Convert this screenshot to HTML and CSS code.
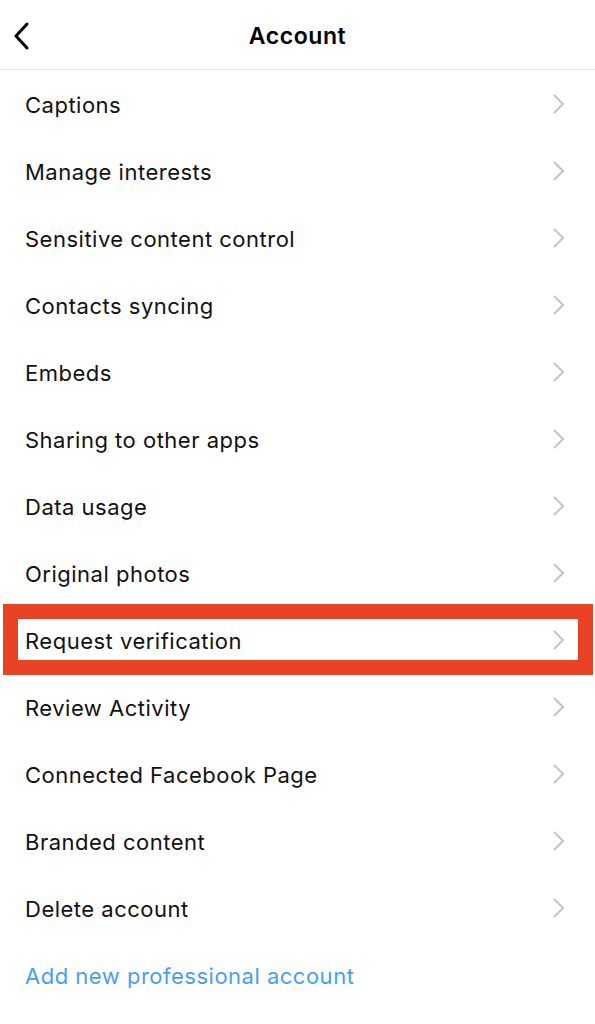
FILE: index.html
```html
<!DOCTYPE html>
<html>
<head>
<meta charset="utf-8">
<link rel="stylesheet" href="styles.css">
</head>
<body>
<div class="screen">
  <header class="topbar">
    <svg class="back" width="20" height="28" viewBox="0 0 20 28"><path d="M15 2 L4 14 L15 26" fill="none" stroke="#000" stroke-width="3" stroke-linecap="round" stroke-linejoin="round"/></svg>
    <h1 class="title">Account</h1>
  </header>
  <ul class="list">
    <li class="row"><span>Captions</span><svg class="chev" viewBox="0 0 14 22"><path d="M2 2 L11 11 L2 20" fill="none" stroke="#c4c4c7" stroke-width="2"/></svg></li>
    <li class="row"><span>Manage interests</span><svg class="chev" viewBox="0 0 14 22"><path d="M2 2 L11 11 L2 20" fill="none" stroke="#c4c4c7" stroke-width="2"/></svg></li>
    <li class="row"><span>Sensitive content control</span><svg class="chev" viewBox="0 0 14 22"><path d="M2 2 L11 11 L2 20" fill="none" stroke="#c4c4c7" stroke-width="2"/></svg></li>
    <li class="row"><span>Contacts syncing</span><svg class="chev" viewBox="0 0 14 22"><path d="M2 2 L11 11 L2 20" fill="none" stroke="#c4c4c7" stroke-width="2"/></svg></li>
    <li class="row"><span>Embeds</span><svg class="chev" viewBox="0 0 14 22"><path d="M2 2 L11 11 L2 20" fill="none" stroke="#c4c4c7" stroke-width="2"/></svg></li>
    <li class="row"><span>Sharing to other apps</span><svg class="chev" viewBox="0 0 14 22"><path d="M2 2 L11 11 L2 20" fill="none" stroke="#c4c4c7" stroke-width="2"/></svg></li>
    <li class="row"><span>Data usage</span><svg class="chev" viewBox="0 0 14 22"><path d="M2 2 L11 11 L2 20" fill="none" stroke="#c4c4c7" stroke-width="2"/></svg></li>
    <li class="row"><span>Original photos</span><svg class="chev" viewBox="0 0 14 22"><path d="M2 2 L11 11 L2 20" fill="none" stroke="#c4c4c7" stroke-width="2"/></svg></li>
    <li class="row highlight"><span>Request verification</span><svg class="chev" viewBox="0 0 14 22"><path d="M2 2 L11 11 L2 20" fill="none" stroke="#c4c4c7" stroke-width="2"/></svg></li>
    <li class="row"><span>Review Activity</span><svg class="chev" viewBox="0 0 14 22"><path d="M2 2 L11 11 L2 20" fill="none" stroke="#c4c4c7" stroke-width="2"/></svg></li>
    <li class="row"><span>Connected Facebook Page</span><svg class="chev" viewBox="0 0 14 22"><path d="M2 2 L11 11 L2 20" fill="none" stroke="#c4c4c7" stroke-width="2"/></svg></li>
    <li class="row"><span>Branded content</span><svg class="chev" viewBox="0 0 14 22"><path d="M2 2 L11 11 L2 20" fill="none" stroke="#c4c4c7" stroke-width="2"/></svg></li>
    <li class="row"><span>Delete account</span><svg class="chev" viewBox="0 0 14 22"><path d="M2 2 L11 11 L2 20" fill="none" stroke="#c4c4c7" stroke-width="2"/></svg></li>
    <li class="row link"><span>Add new professional account</span></li>
  </ul>
</div>
</body>
</html>
```

FILE: styles.css
```css
html, body {
  margin: 0;
  padding: 0;
  background: #fff;
}
.screen {
  width: 595px;
  height: 1024px;
  overflow: hidden;
  font-family: Inter, "Noto Sans", sans-serif;
  color: #111;
}
.topbar {
  position: relative;
  height: 69px;
  border-bottom: 1px solid #e6e6e6;
  display: flex;
  align-items: center;
  justify-content: center;
}
.back {
  position: absolute;
  left: 12px;
  top: 22px;
}
.title {
  margin: 0;
  font-size: 23px;
  font-weight: 600;
  letter-spacing: 0.6px;
  color: #000;
  padding-top: 2px;
}
.list {
  list-style: none;
  margin: 0;
  padding: 0;
}
.row {
  position: relative;
  height: 67px;
  box-sizing: border-box;
  display: flex;
  align-items: center;
  justify-content: space-between;
  padding: 2px 29px 0 25px;
  font-size: 22px;
  letter-spacing: 0.5px;
}
.chev {
  width: 14px;
  height: 22px;
  margin-top: -2px;
}
.link {
  color: #4a9ef2;
}
.highlight::after {
  content: "";
  position: absolute;
  left: 3px;
  right: 2px;
  top: -2px;
  bottom: -2px;
  border: 15px solid #e94326;
  pointer-events: none;
}
```
